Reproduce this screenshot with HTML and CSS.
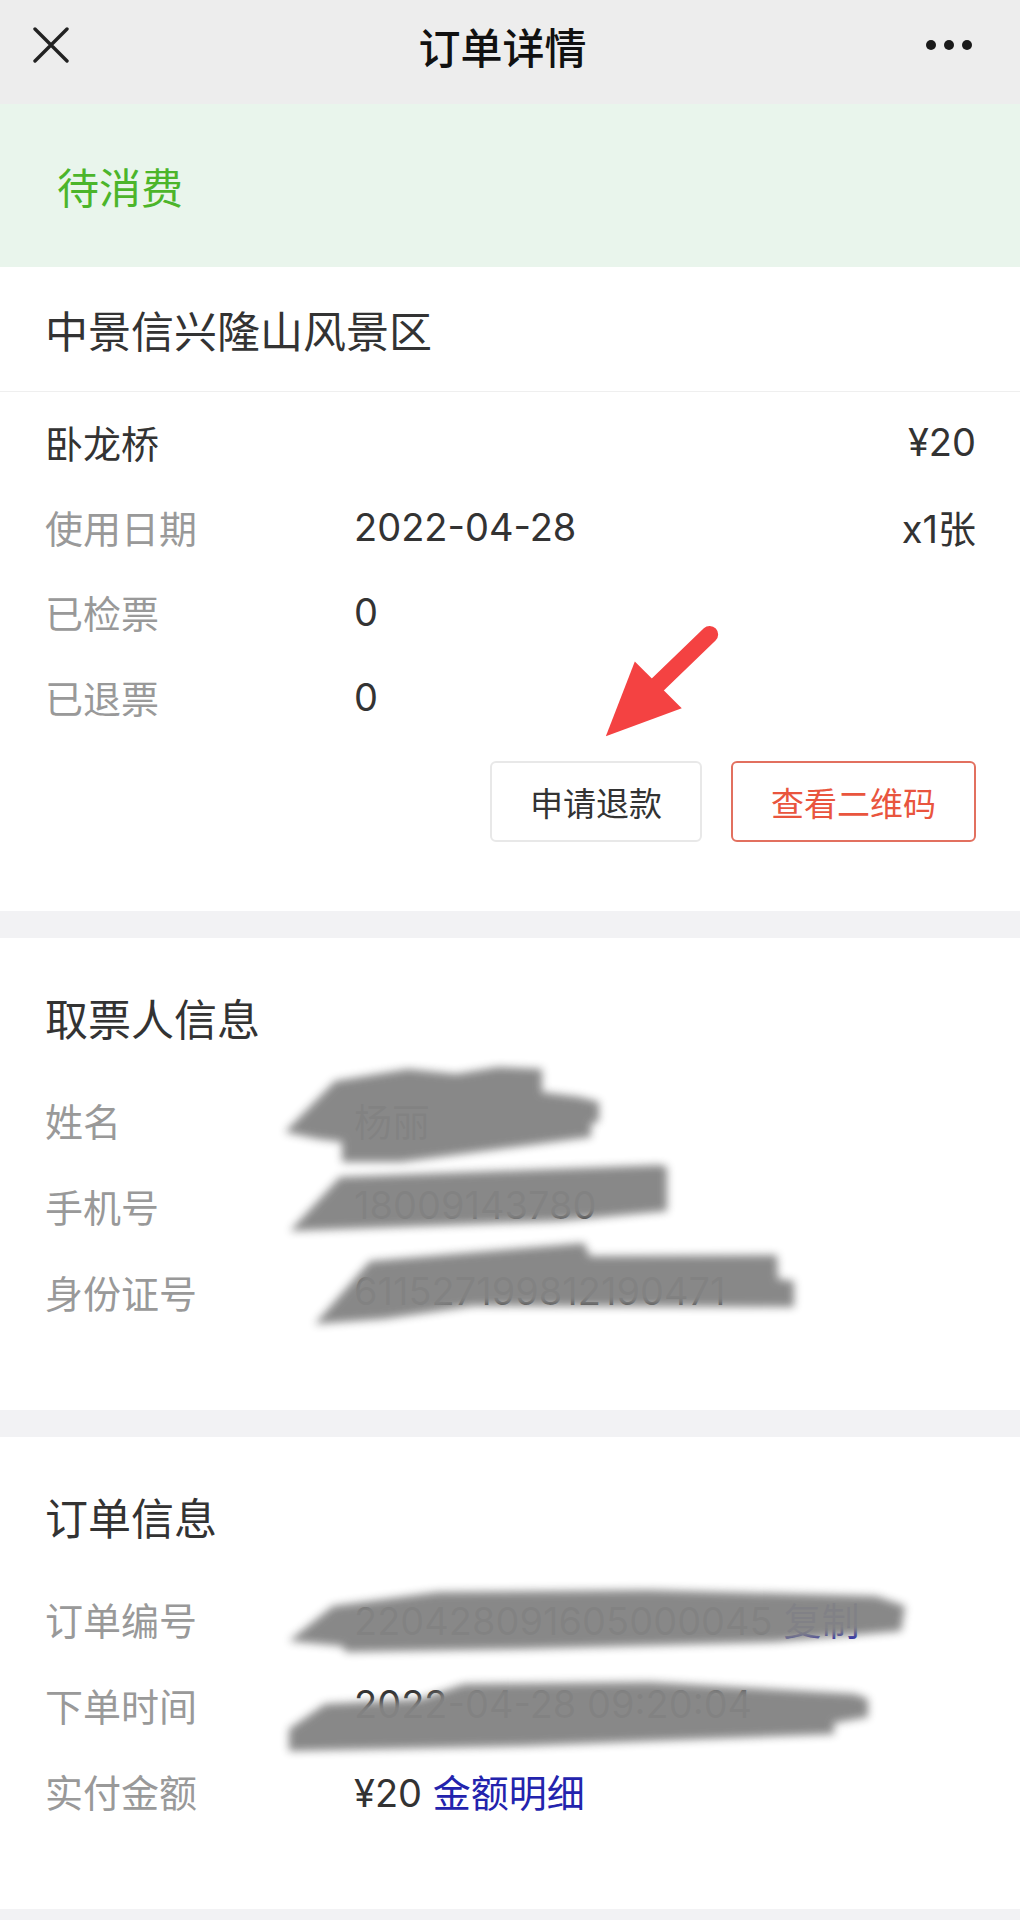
FILE: index.html
```html
<!DOCTYPE html>
<html lang="zh-CN">
<head>
    <meta charset="UTF-8">
    <meta name="viewport" content="width=device-width, initial-scale=1.0">
    <title>订单详情</title>
    <link rel="stylesheet" href="styles.css">
</head>
<body>

    <header class="nav">
        <svg class="nav-close" width="36" height="36" viewBox="0 0 36 36">
            <path d="M2 2 L34 34 M34 2 L2 34" stroke="#222" stroke-width="3.4" stroke-linecap="round" fill="none"/>
        </svg>
        <h1 class="nav-title">订单详情</h1>
        <div class="nav-more"><span></span><span></span><span></span></div>
    </header>

    <div class="status">待消费</div>

    <section class="card ticket">
        <div class="card-head">中景信兴隆山风景区</div>
        <div class="ticket-body">
            <div class="row">
                <span class="name">卧龙桥</span>
                <span></span>
                <span class="right">¥20</span>
            </div>
            <div class="row">
                <span class="label">使用日期</span>
                <span class="value">2022-04-28</span>
                <span class="right">x1张</span>
            </div>
            <div class="row">
                <span class="label">已检票</span>
                <span class="value">0</span>
                <span></span>
            </div>
            <div class="row">
                <span class="label">已退票</span>
                <span class="value">0</span>
                <span></span>
            </div>
            <div class="actions">
                <button class="btn">申请退款</button>
                <button class="btn btn-red">查看二维码</button>
            </div>
        </div>
        <!-- annotation arrow drawn over the card -->
        <svg class="overlay" viewBox="0 267 1020 645">
            <line x1="710" y1="635" x2="655" y2="688" stroke="#f44242" stroke-width="17" stroke-linecap="round"/>
            <polygon points="635,662 682,709 606,737" fill="#f44242"/>
        </svg>
    </section>

    <section class="card info">
        <h2 class="info-title">取票人信息</h2>
        <div class="row">
            <span class="label">姓名</span>
            <span class="value">杨丽</span>
            <span></span>
        </div>
        <div class="row">
            <span class="label">手机号</span>
            <span class="value">18009143780</span>
            <span></span>
        </div>
        <div class="row">
            <span class="label">身份证号</span>
            <span class="value">611527199812190471</span>
            <span></span>
        </div>
        <svg class="overlay" viewBox="0 939 1020 472">
            <defs>
                <filter id="smudge1" x="-10%" y="-30%" width="120%" height="160%">
                    <feGaussianBlur stdDeviation="4.5"/>
                </filter>
            </defs>
            <g class="smudge" filter="url(#smudge1)">
                <polygon points="285,1133 335,1082 408,1070 456,1075 498,1068 542,1070 542,1093 580,1098 599,1103 599,1122 591,1125 591,1138 401,1163 342,1163 342,1143 318,1140"/>
                <polygon points="340,1178 660,1166 667,1168 667,1212 560,1222 290,1232"/>
                <polygon points="315,1325 370,1262 584,1244 590,1257 777,1256 778,1280 794,1282 794,1308 473,1307 384,1320"/>
            </g>
        </svg>
    </section>

    <section class="card info">
        <h2 class="info-title">订单信息</h2>
        <div class="row">
            <span class="label">订单编号</span>
            <span class="value">220428091605000045 <span class="link">复制</span></span>
            <span></span>
        </div>
        <div class="row">
            <span class="label">下单时间</span>
            <span class="value">2022-04-28 09:20:04</span>
            <span></span>
        </div>
        <div class="row">
            <span class="label">实付金额</span>
            <span class="value">¥20 <span class="link">金额明细</span></span>
            <span></span>
        </div>
        <svg class="overlay" viewBox="0 1438 1020 472">
            <defs>
                <filter id="smudge2" x="-10%" y="-30%" width="120%" height="160%">
                    <feGaussianBlur stdDeviation="4.5"/>
                </filter>
            </defs>
            <g class="smudge" filter="url(#smudge2)">
                <polygon points="289,1642 333,1607 438,1593 649,1591 876,1597 905,1607 901,1632 775,1643 522,1650 346,1653 342,1647"/>
                <polygon points="289,1752 289,1730 325,1705 420,1700 464,1685 650,1683 855,1695 868,1700 868,1718 834,1724 834,1735 522,1747"/>
            </g>
        </svg>
    </section>

</body>
</html>
```

FILE: styles.css
```css
* {
    box-sizing: border-box;
}
body {
    margin: 0;
    min-height: 1920px;
    background: #f2f2f4;
    font-family: Inter, "Noto Sans CJK SC", sans-serif;
    color: #333;
}
.nav {
    height: 104px;
    padding: 0 48px 14px 33px;
    background: #ededed;
    display: grid;
    grid-template-columns: 1fr auto 1fr;
    align-items: center;
}
.nav-close {
    display: block;
}
.nav-title {
    margin: 0;
    font-size: 42px;
    font-weight: 500;
    color: #111;
}
.nav-more {
    justify-self: end;
    display: flex;
    gap: 8px;
}
.nav-more span {
    width: 10px;
    height: 10px;
    border-radius: 50%;
    background: #1a1a1a;
}
.status {
    height: 163px;
    padding-left: 57px;
    display: flex;
    align-items: center;
    background: #e9f5ec;
    color: #4cb52b;
    font-size: 42px;
}
.card {
    position: relative;
    background: #fff;
    margin-bottom: 27px;
}
.card-head {
    height: 125px;
    padding-left: 45px;
    display: flex;
    align-items: center;
    font-size: 43px;
    border-bottom: 1px solid #efefef;
}
.ticket-body {
    padding: 7px 44px 69px 45px;
}
.row {
    display: grid;
    grid-template-columns: 309px 1fr auto;
    align-items: center;
    height: 85px;
    font-size: 38px;
}
.label {
    color: #999;
}
.right {
    text-align: right;
}
.link {
    color: #2323ad;
}
.actions {
    display: flex;
    justify-content: flex-end;
    gap: 29px;
    margin-top: 22px;
}
.btn {
    height: 81px;
    padding: 0 38px;
    font-family: inherit;
    font-size: 33px;
    color: #333;
    background: #fff;
    border: 2px solid #e8e8e8;
    border-radius: 6px;
}
.btn-red {
    color: #e9553e;
    border-color: #e2705f;
}
.info {
    padding: 36px 44px 76px 45px;
}
.info-title {
    height: 86px;
    margin: 0 0 16px;
    display: flex;
    align-items: center;
    font-size: 43px;
    font-weight: normal;
}
.info .row {
    height: 86px;
}
.overlay {
    position: absolute;
    left: 0;
    top: 0;
    width: 100%;
    height: 100%;
    pointer-events: none;
}
.smudge {
    fill: #858585;
    opacity: 0.97;
}
```
